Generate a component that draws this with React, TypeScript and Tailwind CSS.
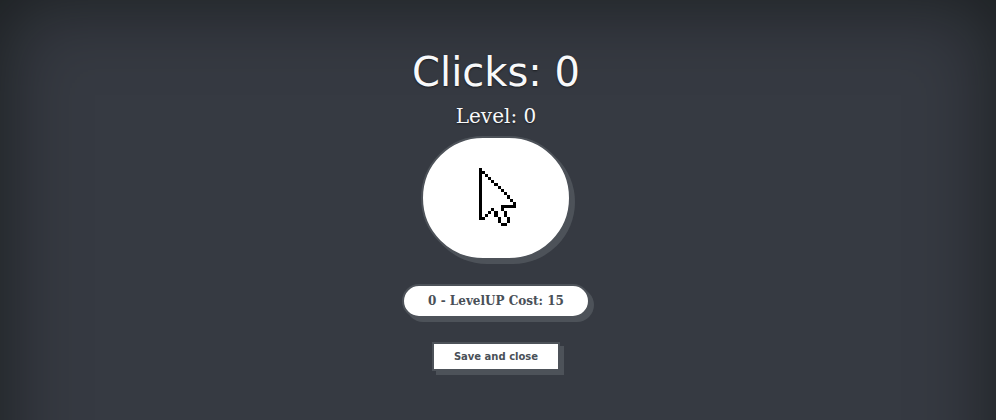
import { useState } from "react";

// Outline of the arrow on a 12 x 19 grid: [column, row, width, height]
const CURSOR_CELLS = [
  [0, 0, 1, 17], [1, 1, 1, 1], [2, 2, 1, 1], [3, 3, 1, 1], [4, 4, 1, 1],
  [5, 5, 1, 1], [6, 6, 1, 1], [7, 7, 1, 1], [8, 8, 1, 1], [9, 9, 1, 1],
  [10, 10, 1, 1], [11, 11, 1, 1], [7, 12, 5, 1], [7, 13, 1, 1],
  [8, 14, 1, 2], [9, 16, 1, 2], [7, 18, 2, 1], [6, 16, 1, 2],
  [5, 14, 1, 2], [4, 13, 1, 1], [3, 14, 1, 1], [2, 15, 1, 1], [1, 16, 1, 1],
];

function PixelCursor() {
  return (
    <svg viewBox="0 0 12 19" className="h-[58px] w-[37px]" preserveAspectRatio="none" aria-hidden="true">
      {CURSOR_CELLS.map(([x, y, w, h]) => (
        <rect key={`${x}-${y}`} x={x} y={y} width={w} height={h} shapeRendering="crispEdges" />
      ))}
    </svg>
  );
}

export default function App() {
  const [clicks, setClicks] = useState(0);
  const [level, setLevel] = useState(0);
  const cost = 15 * (level + 1);

  const levelUp = () => {
    if (clicks >= cost) {
      setClicks(clicks - cost);
      setLevel(level + 1);
    }
  };

  return (
    <div className="relative min-h-screen overflow-hidden bg-[#363a42] text-[#f8f9fa]">
      <div className="pointer-events-none absolute inset-x-0 top-0 -bottom-28 shadow-[inset_0_0_80px_rgba(0,6,0,0.54)]" />
      <main className="relative flex flex-col items-center pt-12 pr-1 pb-11">
        <h1 className="font-['DejaVu_Sans',sans-serif] text-[40px] leading-12 [text-shadow:0_1px_2px_rgba(0,0,0,0.5)]">
          Clicks: {clicks}
        </h1>
        <p className="mt-1 font-['DejaVu_Serif',serif] text-xl leading-8 [text-shadow:0_1px_2px_rgba(0,0,0,0.5)]">
          Level: {level}
        </p>
        <button
          type="button"
          aria-label="Click"
          onClick={() => setClicks(clicks + level + 1)}
          className="mt-1 flex h-[124px] w-[150px] items-center justify-center rounded-full border-2 border-[#4d5259] bg-white pb-0.5 pl-0.5 shadow-[4px_4px_0_#4d5259]"
        >
          <PixelCursor />
        </button>
        <button
          type="button"
          onClick={levelUp}
          className="mt-6 rounded-full border-2 border-[#4d5259] bg-white px-6 py-1.5 font-['DejaVu_Serif',serif] text-xs leading-[18px] font-bold text-[#495057] shadow-[4px_4px_0_#4d5259]"
        >
          {level} - LevelUP Cost: {cost}
        </button>
        <button
          type="button"
          className="mt-6 border-2 border-[#4d5259] bg-white px-5 py-1 font-['DejaVu_Sans',sans-serif] text-[10px] leading-[17px] font-bold text-[#495057] shadow-[4px_4px_0_#4d5259]"
        >
          Save and close
        </button>
      </main>
    </div>
  );
}
